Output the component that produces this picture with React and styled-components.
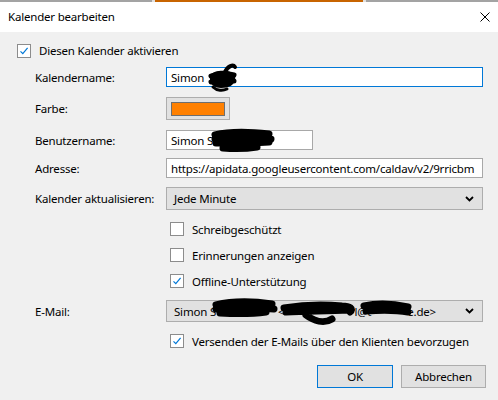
import React from "react";
import styled, { createGlobalStyle } from "styled-components";

const Global = createGlobalStyle`
  html, body { margin: 0; padding: 0; background: #f0f0f0; }
  * { box-sizing: border-box; }
`;

const Window = styled.div`
  width: 498px;
  height: 400px;
  display: flex;
  flex-direction: column;
  background: #f0f0f0;
  font-family: "Noto Sans", "Open Sans", sans-serif;
  font-size: 11.5px;
  letter-spacing: -0.2px;
  color: #000;
  overflow: hidden;
`;

const TopStrip = styled.div`
  height: 2px;
  background: linear-gradient(
    to right,
    #a3a3a3 0 152px,
    #e0e0e0 152px 155px,
    #c86400 155px 363px,
    #e0e0e0 363px 366px,
    #a3a3a3 366px
  );
`;

const TitleBar = styled.div`
  height: 30px;
  background: #fff;
  display: flex;
  align-items: center;
  justify-content: space-between;
  padding: 0 8px 0 8px;
`;

const Title = styled.span`
  line-height: 1;
`;

const CloseIcon = styled.svg`
  width: 10px;
  height: 10px;
`;

const Body = styled.div`
  flex: 1;
  display: flex;
  flex-direction: column;
  padding: 11px 15px 0 17px;
`;

const Row = styled.div`
  display: grid;
  grid-template-columns: ${(p) => (p.$single ? "1fr" : "131px 1fr")};
  align-items: center;
  height: ${(p) => p.$h}px;
  margin-top: ${(p) => p.$mt || 0}px;
  padding-left: ${(p) => (p.$single ? 0 : 18)}px;
`;

const Label = styled.span`
  white-space: nowrap;
`;

const Field = styled.div`
  position: relative;
  display: flex;
  align-items: center;
  height: 100%;
`;

const TextBox = styled.div`
  width: ${(p) => p.$w || "100%"};
  height: 20px;
  background: #fff;
  border: 1px solid ${(p) => (p.$focused ? "#0078d7" : "#a8a8a8")};
  padding: 0 4px;
  display: flex;
  align-items: center;
  white-space: nowrap;
  overflow: hidden;
`;

const ColorButton = styled.div`
  width: 64px;
  height: 23px;
  background: #e1e1e1;
  border: 1px solid #adadad;
  display: flex;
  align-items: center;
  justify-content: center;
`;

const Swatch = styled.div`
  width: 54px;
  height: 14px;
  background: ${(p) => p.$color};
  border: 1px solid #6e6e6e;
`;

const Select = styled.div`
  width: 100%;
  height: ${(p) => p.$h || 23}px;
  background: #e1e1e1;
  border: 1px solid #adadad;
  display: flex;
  align-items: center;
  justify-content: space-between;
  padding: 0 8px 0 7px;
  white-space: nowrap;
`;

const SelectText = styled.span`
  display: flex;
  align-items: center;
`;

const Gap = styled.span`
  display: inline-block;
  width: ${(p) => p.$w}px;
`;

const Chevron = () => (
  <svg width="9" height="6" viewBox="0 0 9 6">
    <path d="M1 1 L4.5 4.5 L8 1" fill="none" stroke="#000" strokeWidth="1.8" />
  </svg>
);

const Check = styled.label`
  display: flex;
  align-items: center;
  gap: 8px;
  margin-left: ${(p) => p.$ml || 0}px;
  white-space: nowrap;
`;

const Box = styled.span`
  width: 14px;
  height: 14px;
  background: #fff;
  border: 1px solid #8c8c8c;
  display: flex;
  align-items: center;
  justify-content: center;
  flex: none;
`;

const Tick = () => (
  <svg width="10" height="10" viewBox="0 0 10 10">
    <path d="M1.5 5.3 L3.8 7.6 L8.6 1.8" fill="none" stroke="#0078d7" strokeWidth="1.2" />
  </svg>
);

const CheckBox = ({ checked, children, ml }) => (
  <Check $ml={ml}>
    <Box>{checked && <Tick />}</Box>
    <span>{children}</span>
  </Check>
);

const Footer = styled.div`
  display: flex;
  justify-content: flex-end;
  gap: 8px;
  margin-top: 16px;
  margin-right: -3px;
`;

const Button = styled.div`
  width: ${(p) => p.$w}px;
  height: 23px;
  background: #e1e1e1;
  border: 1px solid ${(p) => (p.$default ? "#0078d7" : "#adadad")};
  display: flex;
  align-items: center;
  justify-content: center;
`;

/* black marker strokes drawn over the personal details */
const Scribble = styled.svg`
  position: absolute;
  left: ${(p) => p.$x}px;
  top: ${(p) => p.$y}px;
  pointer-events: none;
  overflow: visible;
`;

const ink = { fill: "none", stroke: "#000", strokeLinecap: "round", strokeLinejoin: "round" };

export default function App() {
  return (
    <>
      <Global />
      <Window>
        <TopStrip />
        <TitleBar>
          <Title>Kalender bearbeiten</Title>
          <CloseIcon viewBox="0 0 10 10">
            <path d="M0.5 0.5 L9.5 9.5 M9.5 0.5 L0.5 9.5" stroke="#000" strokeWidth="1" />
          </CloseIcon>
        </TitleBar>
        <Body>
          <Row $h={15} $single>
            <CheckBox checked>Diesen Kalender aktivieren</CheckBox>
          </Row>

          <Row $h={20} $mt={9}>
            <Label>Kalendername:</Label>
            <Field>
              <TextBox $focused>Simon</TextBox>
              <Scribble $x={41} $y={-4} width="32" height="30" viewBox="0 0 32 30">
                <path
                  d="M3 12 C6 8 14 7 20 8 C26 9 29 12 28 17 C27 22 22 25 14 25 C8 25 4 22 3 18 Z"
                  fill="#000"
                />
                <path d="M4 13 C12 10 20 10 27 12 M4 19 C12 17 20 18 27 18" {...ink} strokeWidth="5" />
                <path d="M18 9 C21 3 26 1 28 4" {...ink} strokeWidth="4" />
                <path d="M6 24 C10 28 16 28 20 26" {...ink} strokeWidth="3" />
              </Scribble>
            </Field>
          </Row>

          <Row $h={23} $mt={10}>
            <Label>Farbe:</Label>
            <Field>
              <ColorButton>
                <Swatch $color="#ff8000" />
              </ColorButton>
            </Field>
          </Row>

          <Row $h={20} $mt={10}>
            <Label>Benutzername:</Label>
            <Field>
              <TextBox $w="147px">Simon S</TextBox>
              <Scribble $x={45} $y={-1} width="64" height="24" viewBox="0 0 64 24">
                <path
                  d="M4 6 C20 2 40 3 58 5 M4 10 C22 8 42 8 60 10 M5 14 C24 14 42 14 58 13 M12 19 C24 20 34 20 46 18"
                  {...ink}
                  strokeWidth="7"
                />
              </Scribble>
            </Field>
          </Row>

          <Row $h={20} $mt={8}>
            <Label>Adresse:</Label>
            <Field>
              <TextBox>https://apidata.googleusercontent.com/caldav/v2/9rricbm</TextBox>
            </Field>
          </Row>

          <Row $h={23} $mt={9}>
            <Label>Kalender aktualisieren:</Label>
            <Field>
              <Select>
                <span>Jede Minute</span>
                <Chevron />
              </Select>
            </Field>
          </Row>

          <Row $h={16} $mt={11}>
            <span />
            <CheckBox ml={4}>Schreibgeschützt</CheckBox>
          </Row>
          <Row $h={16} $mt={10}>
            <span />
            <CheckBox ml={4}>Erinnerungen anzeigen</CheckBox>
          </Row>
          <Row $h={16} $mt={10}>
            <span />
            <CheckBox ml={4} checked>
              Offline-Unterstützung
            </CheckBox>
          </Row>

          <Row $h={22} $mt={11}>
            <Label>E-Mail:</Label>
            <Field>
              <Select $h={22}>
                <SelectText>
                  <span>Simon S</span>
                  <Gap $w={62} />
                  <span>&lt;</span>
                  <Gap $w={70} />
                  <span>l@t</span>
                  <Gap $w={36} />
                  <span>e.de&gt;</span>
                </SelectText>
                <Chevron />
              </Select>
              <Scribble $x={46} $y={-2} width="204" height="32" viewBox="0 0 204 32">
                <path
                  d="M4 7 C20 3 40 3 60 6 M4 11 C22 9 42 9 62 11 M8 15 C25 16 40 16 54 14"
                  {...ink}
                  strokeWidth="7"
                />
                <path
                  d="M72 10 C90 7 110 6 130 8 C138 8 142 11 138 14 M74 14 C96 13 116 13 136 12 M94 17 C102 23 112 26 120 21"
                  {...ink}
                  strokeWidth="7"
                />
                <path
                  d="M152 8 C166 5 182 6 196 9 M154 13 C170 12 184 12 196 14"
                  {...ink}
                  strokeWidth="7"
                />
              </Scribble>
            </Field>
          </Row>

          <Row $h={16} $mt={11}>
            <span />
            <CheckBox ml={4} checked>
              Versenden der E-Mails über den Klienten bevorzugen
            </CheckBox>
          </Row>

          <Footer>
            <Button $w={76} $default>
              OK
            </Button>
            <Button $w={85}>Abbrechen</Button>
          </Footer>
        </Body>
      </Window>
    </>
  );
}
